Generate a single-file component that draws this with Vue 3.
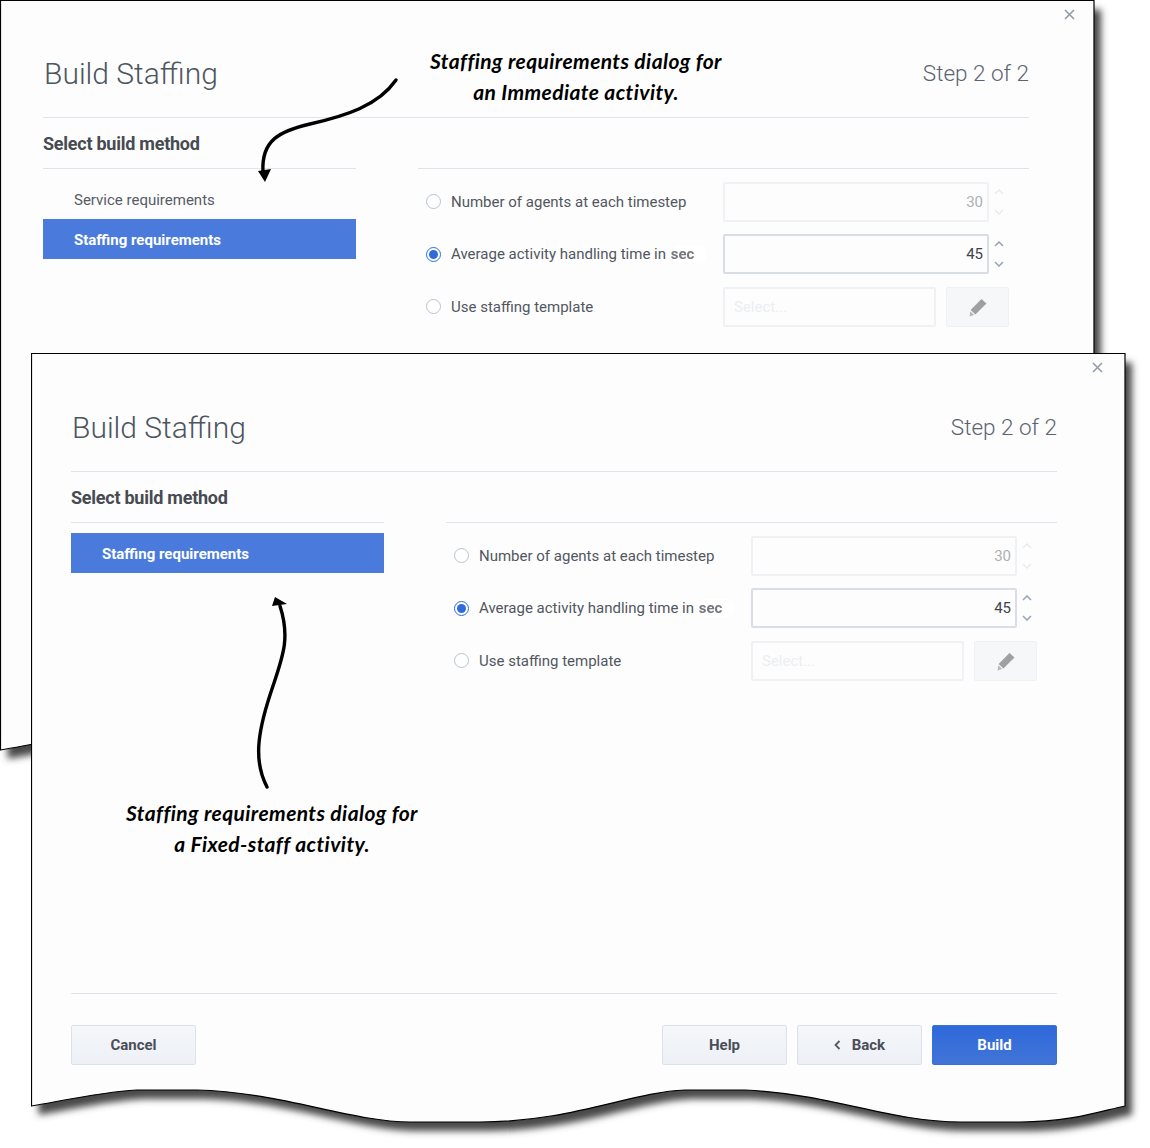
<template>
  <div class="canvas">
    <section
      v-for="sheet in sheets"
      :key="sheet.id"
      class="sheet"
      :class="sheet.id"
    >
      <svg class="paper" width="1135" height="800" viewBox="0 0 1135 800">
        <defs>
          <filter :id="`blur-${sheet.id}`" x="-5%" y="-5%" width="110%" height="110%">
            <feGaussianBlur stdDeviation="3.5" />
          </filter>
        </defs>
        <path
          :d="sheet.outline"
          fill="#484848"
          transform="translate(7 9)"
          :filter="`url(#blur-${sheet.id})`"
        />
        <path :d="sheet.outline" fill="#fdfdfd" stroke="#000" stroke-width="1.2" />
      </svg>

      <div class="dialog">
        <svg class="close" width="11" height="11" viewBox="0 0 11 11">
          <path d="M1 1l9 9M10 1l-9 9" stroke="#8f9daa" stroke-width="1.6" fill="none" />
        </svg>

        <header class="head">
          <h1>Build Staffing</h1>
          <span class="step">Step 2 of 2</span>
        </header>

        <div class="columns">
          <div class="method">
            <h2>Select build method</h2>
            <ul>
              <li
                v-for="item in sheet.methods"
                :key="item.label"
                :class="{ selected: item.selected }"
              >
                {{ item.label }}
              </li>
            </ul>
          </div>

          <div class="options">
            <div class="option">
              <span class="radio"></span>
              <span class="label">Number of agents at each timestep</span>
              <div class="number off">30</div>
              <span class="spin off">
                <svg width="10" height="6" viewBox="0 0 10 6"><path d="M1 5l4-4 4 4" /></svg>
                <svg width="10" height="6" viewBox="0 0 10 6"><path d="M1 1l4 4 4-4" /></svg>
              </span>
            </div>
            <div class="option">
              <span class="radio on"></span>
              <span class="label">Average activity handling time in <em class="unit">sec</em></span>
              <div class="number">45</div>
              <span class="spin">
                <svg width="10" height="6" viewBox="0 0 10 6"><path d="M1 5l4-4 4 4" /></svg>
                <svg width="10" height="6" viewBox="0 0 10 6"><path d="M1 1l4 4 4-4" /></svg>
              </span>
            </div>
            <div class="option">
              <span class="radio"></span>
              <span class="label">Use staffing template</span>
              <div class="select">Select...</div>
              <button class="edit" type="button">
                <svg width="18" height="19" viewBox="0 0 18 19">
                  <path d="M12.5 1l5 4.6L6.4 16.6 1.6 12z" fill="#a0a0a0" />
                  <path d="M1.2 13.2l4 3.8-4.6 1.4z" fill="#b8b8b8" />
                </svg>
              </button>
            </div>
          </div>
        </div>

        <footer v-if="sheet.footer" class="foot">
          <button class="btn" type="button">Cancel</button>
          <div class="foot-right">
            <button class="btn" type="button">Help</button>
            <button class="btn back" type="button">
              <svg width="7" height="10" viewBox="0 0 7 10">
                <path d="M5.5 1L1.5 5l4 4" stroke="#555c66" stroke-width="1.8" fill="none" />
              </svg>
              Back
            </button>
            <button class="btn primary" type="button">Build</button>
          </div>
        </footer>
      </div>
    </section>

    <!-- callouts drawn over both dialogs -->
    <svg class="arrows" width="1150" height="1148" viewBox="0 0 1150 1148">
      <g fill="none" stroke="#000" stroke-linecap="round">
        <path d="M396 80C378 106 345 116 310 124C280 131 261 140 263 172" stroke-width="3.4" />
        <path d="M267 787C254 762 257 735 270 695C282 658 291 640 280 606" stroke-width="3.4" />
      </g>
      <path d="M258 171L271 169L265 182z" />
      <path d="M272 606L287 604L275 597z" />
    </svg>
    <p class="note note-top">Staffing requirements dialog for<br />an Immediate activity.</p>
    <p class="note note-bottom">Staffing requirements dialog for<br />a Fixed-staff activity.</p>
  </div>
</template>

<script setup>
// torn-paper bottom edge, same wave on both sheets
const torn = (h) =>
  `M0.5 0.5H1094V${h}C1070 ${h + 5} 1040 ${h + 16} 989 ${h + 16}L929 ${h + 16}` +
  `C860 ${h + 16} 800 ${h - 12} 714 ${h - 16}L654 ${h - 16}` +
  `C600 ${h - 14} 540 ${h + 16} 449 ${h + 16}L379 ${h + 16}` +
  `C320 ${h + 16} 250 ${h - 14} 166 ${h - 16}L106 ${h - 16}C70 ${h - 14} 30 ${h - 5} 0.5 ${h}Z`;

const sheets = [
  {
    id: "back",
    outline: torn(750),
    footer: false,
    methods: [
      { label: "Service requirements", selected: false },
      { label: "Staffing requirements", selected: true },
    ],
  },
  {
    id: "front",
    outline: torn(753),
    footer: true,
    methods: [{ label: "Staffing requirements", selected: true }],
  },
];
</script>

<style scoped>
.canvas {
  position: relative;
  width: 1150px;
  height: 1148px;
  overflow: hidden;
  background: #fff;
  font-family: Roboto, "Liberation Sans", sans-serif;
  color: #4a4f57;
}

.sheet {
  position: absolute;
  width: 1095px;
  height: 770px;
}

.back {
  left: 0;
  top: 0;
}

.front {
  left: 31px;
  top: 353px;
}

.paper {
  position: absolute;
  left: 0;
  top: 0;
}

.dialog {
  position: relative;
  display: flex;
  flex-direction: column;
  height: 712px;
  box-sizing: border-box;
  width: 986px;
  margin-left: 43px;
}

.front .dialog {
  margin-left: 40px;
  padding-top: 1px;
}

.close {
  position: absolute;
  left: 1021px;
  top: 9px;
}

.head {
  display: flex;
  justify-content: space-between;
  align-items: center;
  box-sizing: border-box;
  height: 118px;
  padding: 53px 0 24px;
  border-bottom: 1px solid #e0e3ec;
}

.head h1 {
  margin: 0;
  padding: 1px 0 0 1px;
  font-size: 30px;
  font-weight: 300;
  line-height: 40px;
  color: #4c5661;
}

.step {
  font-size: 22.5px;
  font-weight: 300;
  color: #5a6470;
}

.columns {
  display: flex;
  justify-content: space-between;
}

.method {
  width: 313px;
}

.method h2 {
  margin: 0;
  height: 51px;
  box-sizing: border-box;
  border-bottom: 1px solid #e0e3ec;
  font-size: 18px;
  font-weight: 700;
  line-height: 52px;
  letter-spacing: -0.25px;
  color: #464b52;
}

.method ul {
  list-style: none;
  margin: 10px 0 0;
  padding: 0;
}

.method li {
  height: 40px;
  padding-left: 31px;
  font-size: 15px;
  line-height: 42px;
  color: #565c66;
}

.method li.selected {
  background: #4a7bdc;
  color: #fff;
  font-weight: 700;
}

.options {
  width: 611px;
  box-sizing: border-box;
  margin-top: 50px;
  padding: 13px 0 0 8px;
  border-top: 1px solid #e0e3ec;
}

.option {
  display: flex;
  align-items: center;
  height: 40px;
}

.option + .option {
  margin-top: 12px;
}

.option:last-child {
  margin-top: 13px;
}

.radio {
  position: relative;
  width: 15px;
  height: 15px;
  box-sizing: border-box;
  border: 1px solid #b9c3d2;
  border-radius: 50%;
  background: #fff;
  margin: 0 10px 1px 0;
  flex: none;
}

.radio.on {
  margin-bottom: 0;
  border: 1.5px solid #2f6bdc;
}

.radio.on::after {
  content: "";
  position: absolute;
  inset: 2px;
  border-radius: 50%;
  background: #2f6bdc;
}

.label {
  width: 272px;
  flex: none;
  margin-bottom: 1px;
  font-size: 15px;
  color: #51575f;
}

.radio.on + .label {
  margin-bottom: 0;
}

.unit {
  display: inline-block;
  padding: 0 13px 0 1px;
  border-radius: 12px;
  background: #fff;
  font-style: normal;
  font-weight: 700;
  color: #75787d;
  filter: blur(0.5px);
}

.number,
.select {
  box-sizing: border-box;
  height: 40px;
  border: 2px solid #d9dde6;
  border-radius: 2px;
  font-size: 15px;
  line-height: 37px;
}

.number {
  width: 266px;
  padding-right: 4px;
  text-align: right;
  color: #3f444b;
}

.number.off {
  border-color: #f0f1f5;
  color: #adb0b4;
}

.select {
  width: 213px;
  padding-left: 9px;
  border-color: #f0f1f5;
  color: #eceef1;
}

.spin {
  display: flex;
  flex-direction: column;
  gap: 14px;
  margin-left: 5px;
}

.spin svg {
  display: block;
  fill: none;
  stroke: #97a3b6;
  stroke-width: 1.5;
}

.spin.off svg {
  stroke: #e9ebef;
}

.edit {
  display: flex;
  align-items: center;
  justify-content: center;
  width: 63px;
  height: 40px;
  margin-left: 10px;
  padding: 0;
  background: #f6f7f9;
  border: 1px solid #eff1f4;
  border-radius: 2px;
}

.foot {
  display: flex;
  justify-content: space-between;
  margin-top: auto;
  padding-top: 31px;
  border-top: 1px solid #e0e3ec;
}

.foot-right {
  display: flex;
  gap: 10px;
}

.btn {
  width: 125px;
  height: 40px;
  padding: 0;
  border: 1px solid #dde2ea;
  border-radius: 2px;
  background: linear-gradient(#f5f7fa, #edf0f5);
  font-family: inherit;
  font-size: 15px;
  font-weight: 700;
  color: #4a4f57;
}

.btn.back svg {
  margin-right: 7px;
}

.btn.primary {
  border-color: #3a6fda;
  background: linear-gradient(#2e69da, #4174d7);
  color: #fff;
}

.arrows {
  position: absolute;
  left: 0;
  top: 0;
}

.note {
  position: absolute;
  margin: 0;
  width: 340px;
  text-align: center;
  font-family: "Lato", sans-serif;
  font-style: italic;
  font-weight: 700;
  font-size: 21px;
  line-height: 31px;
  letter-spacing: 0.4px;
  color: #000;
}

.note-top {
  left: 406px;
  top: 45px;
}

.note-bottom {
  left: 102px;
  top: 797px;
}
</style>

<style>
html,
body {
  background: #fff;
}
</style>
